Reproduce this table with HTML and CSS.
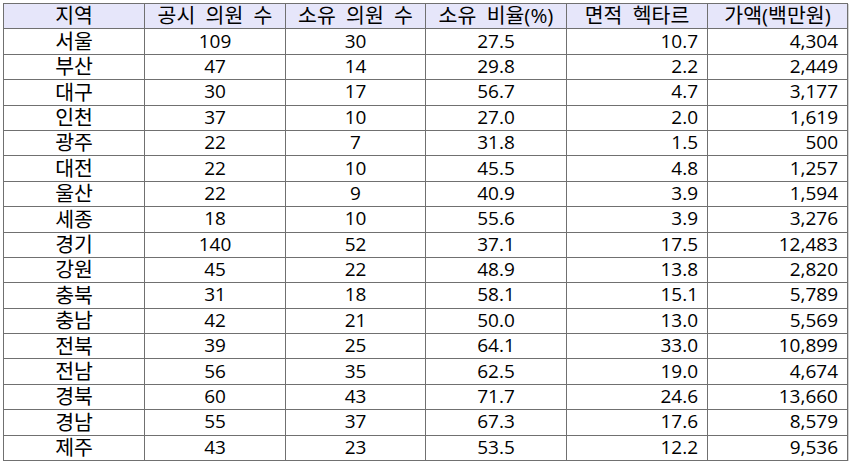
FILE: index.html
```html
<!DOCTYPE html>
<html lang="ko">
<head>
<meta charset="utf-8">
<title>지역별 의원 소유 현황</title>
<link rel="stylesheet" href="styles.css">
</head>
<body>
<div class="sheet">
  <div class="cell head">지역</div>
  <div class="cell head">공시 의원 수</div>
  <div class="cell head">소유 의원 수</div>
  <div class="cell head">소유 비율(%)</div>
  <div class="cell head">면적 헥타르</div>
  <div class="cell head">가액(백만원)</div>

  <div class="cell c k">서울</div><div class="cell c">109</div><div class="cell c">30</div><div class="cell c">27.5</div><div class="cell r">10.7</div><div class="cell r">4,304</div>
  <div class="cell c k">부산</div><div class="cell c">47</div><div class="cell c">14</div><div class="cell c">29.8</div><div class="cell r">2.2</div><div class="cell r">2,449</div>
  <div class="cell c k">대구</div><div class="cell c">30</div><div class="cell c">17</div><div class="cell c">56.7</div><div class="cell r">4.7</div><div class="cell r">3,177</div>
  <div class="cell c k">인천</div><div class="cell c">37</div><div class="cell c">10</div><div class="cell c">27.0</div><div class="cell r">2.0</div><div class="cell r">1,619</div>
  <div class="cell c k">광주</div><div class="cell c">22</div><div class="cell c">7</div><div class="cell c">31.8</div><div class="cell r">1.5</div><div class="cell r">500</div>
  <div class="cell c k">대전</div><div class="cell c">22</div><div class="cell c">10</div><div class="cell c">45.5</div><div class="cell r">4.8</div><div class="cell r">1,257</div>
  <div class="cell c k">울산</div><div class="cell c">22</div><div class="cell c">9</div><div class="cell c">40.9</div><div class="cell r">3.9</div><div class="cell r">1,594</div>
  <div class="cell c k">세종</div><div class="cell c">18</div><div class="cell c">10</div><div class="cell c">55.6</div><div class="cell r">3.9</div><div class="cell r">3,276</div>
  <div class="cell c k">경기</div><div class="cell c">140</div><div class="cell c">52</div><div class="cell c">37.1</div><div class="cell r">17.5</div><div class="cell r">12,483</div>
  <div class="cell c k">강원</div><div class="cell c">45</div><div class="cell c">22</div><div class="cell c">48.9</div><div class="cell r">13.8</div><div class="cell r">2,820</div>
  <div class="cell c k">충북</div><div class="cell c">31</div><div class="cell c">18</div><div class="cell c">58.1</div><div class="cell r">15.1</div><div class="cell r">5,789</div>
  <div class="cell c k">충남</div><div class="cell c">42</div><div class="cell c">21</div><div class="cell c">50.0</div><div class="cell r">13.0</div><div class="cell r">5,569</div>
  <div class="cell c k">전북</div><div class="cell c">39</div><div class="cell c">25</div><div class="cell c">64.1</div><div class="cell r">33.0</div><div class="cell r">10,899</div>
  <div class="cell c k">전남</div><div class="cell c">56</div><div class="cell c">35</div><div class="cell c">62.5</div><div class="cell r">19.0</div><div class="cell r">4,674</div>
  <div class="cell c k">경북</div><div class="cell c">60</div><div class="cell c">43</div><div class="cell c">71.7</div><div class="cell r">24.6</div><div class="cell r">13,660</div>
  <div class="cell c k">경남</div><div class="cell c">55</div><div class="cell c">37</div><div class="cell c">67.3</div><div class="cell r">17.6</div><div class="cell r">8,579</div>
  <div class="cell c k">제주</div><div class="cell c">43</div><div class="cell c">23</div><div class="cell c">53.5</div><div class="cell r">12.2</div><div class="cell r">9,536</div>
</div>
</body>
</html>
```

FILE: styles.css
```css
html, body {
  margin: 0;
  padding: 0;
  background: #ffffff;
}

body {
  padding: 3px 0 0 3px;
  font-family: "Open Sans", "Noto Sans CJK KR", sans-serif;
  font-size: 19px;
  color: #000000;
}

.sheet {
  display: grid;
  grid-template-columns: 141px 141px 140px 141px 141px 140px;
  grid-auto-rows: 25.4px;
  width: max-content;
  border-top: 1px solid #707070;
  border-left: 1px solid #707070;
  box-shadow: 1px 1px 0 #d4d4d4;
}

.cell {
  box-sizing: border-box;
  border-right: 1px solid #707070;
  border-bottom: 1px solid #707070;
  display: flex;
  align-items: center;
  line-height: 1;
  white-space: pre;
  padding-bottom: 1px;
}

.head {
  justify-content: center;
  background: #e6e6fa;
  font-size: 20.5px;
  word-spacing: 5px;
}

.k {
  font-size: 20.5px;
}

.c {
  justify-content: center;
}

.r {
  justify-content: flex-end;
  padding-right: 9px;
}
```
